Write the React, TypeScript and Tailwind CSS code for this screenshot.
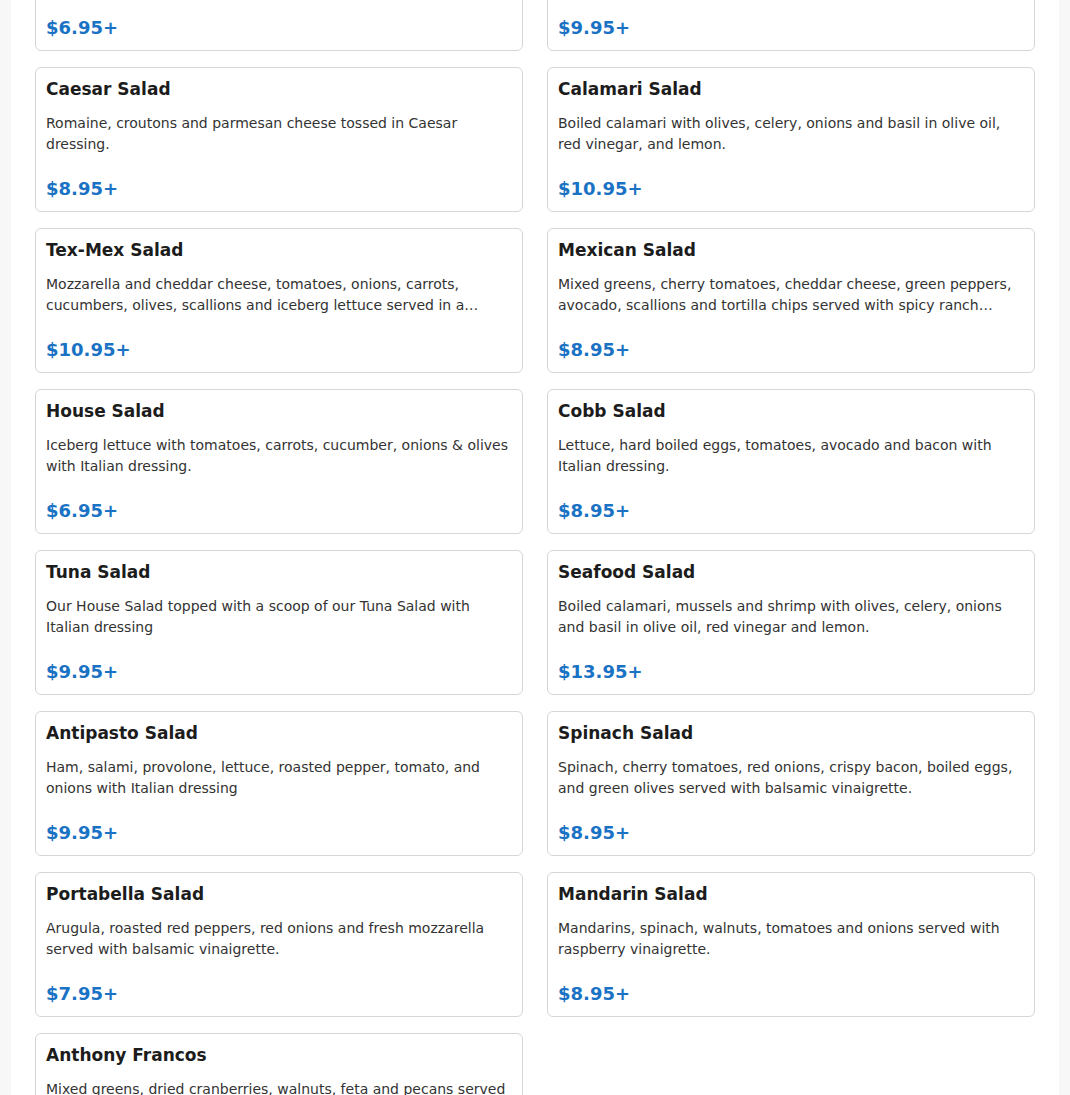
type Item = { name: string; desc: string; price: string };

const salads: Item[] = [
  { name: 'Garden Salad', desc: 'Mixed greens, tomatoes, cucumbers, carrots and onions with your choice of dressing.', price: '$6.95+' },
  { name: 'Greek Salad', desc: 'Romaine, feta cheese, kalamata olives, tomatoes, cucumbers and onions with Greek dressing.', price: '$9.95+' },
  { name: 'Caesar Salad', desc: 'Romaine, croutons and parmesan cheese tossed in Caesar dressing.', price: '$8.95+' },
  { name: 'Calamari Salad', desc: 'Boiled calamari with olives, celery, onions and basil in olive oil, red vinegar, and lemon.', price: '$10.95+' },
  { name: 'Tex-Mex Salad', desc: 'Mozzarella and cheddar cheese, tomatoes, onions, carrots, cucumbers, olives, scallions and iceberg lettuce served in a tortilla shell with salsa and sour cream.', price: '$10.95+' },
  { name: 'Mexican Salad', desc: 'Mixed greens, cherry tomatoes, cheddar cheese, green peppers, avocado, scallions and tortilla chips served with spicy ranch dressing.', price: '$8.95+' },
  { name: 'House Salad', desc: 'Iceberg lettuce with tomatoes, carrots, cucumber, onions & olives with Italian dressing.', price: '$6.95+' },
  { name: 'Cobb Salad', desc: 'Lettuce, hard boiled eggs, tomatoes, avocado and bacon with Italian dressing.', price: '$8.95+' },
  { name: 'Tuna Salad', desc: 'Our House Salad topped with a scoop of our Tuna Salad with Italian dressing', price: '$9.95+' },
  { name: 'Seafood Salad', desc: 'Boiled calamari, mussels and shrimp with olives, celery, onions and basil in olive oil, red vinegar and lemon.', price: '$13.95+' },
  { name: 'Antipasto Salad', desc: 'Ham, salami, provolone, lettuce, roasted pepper, tomato, and onions with Italian dressing', price: '$9.95+' },
  { name: 'Spinach Salad', desc: 'Spinach, cherry tomatoes, red onions, crispy bacon, boiled eggs, and green olives served with balsamic vinaigrette.', price: '$8.95+' },
  { name: 'Portabella Salad', desc: 'Arugula, roasted red peppers, red onions and fresh mozzarella served with balsamic vinaigrette.', price: '$7.95+' },
  { name: 'Mandarin Salad', desc: 'Mandarins, spinach, walnuts, tomatoes and onions served with raspberry vinaigrette.', price: '$8.95+' },
  { name: 'Anthony Francos', desc: 'Mixed greens, dried cranberries, walnuts, feta and pecans served with raspberry vinaigrette.', price: '$9.95+' },
];

function MenuCard({ item }: { item: Item }) {
  return (
    <div className="rounded-md border border-[#d6d6d6] bg-white p-2.5">
      <h3 className="text-[17px] font-bold leading-[22.5px] text-[#1c1c1c]">{item.name}</h3>
      <p className="mt-3 h-[42px] text-sm leading-[21px] text-[#333] line-clamp-2">{item.desc}</p>
      <div className="mt-[21px] text-lg font-bold leading-[25.5px] text-[#1a72c4]">{item.price}</div>
    </div>
  );
}

export default function App() {
  return (
    <div
      className="min-h-screen overflow-hidden bg-[#f7f7f7]"
      style={{ fontFamily: '"DejaVu Sans", Verdana, sans-serif' }}
    >
      <div className="mx-auto w-[1048px] bg-white px-6 pb-6">
        {/* page is scrolled: first row sits partly above the fold */}
        <div className="-mt-[94px] grid grid-cols-2 gap-x-6 gap-y-4">
          {salads.map((s) => (
            <MenuCard key={s.name} item={s} />
          ))}
        </div>
      </div>
    </div>
  );
}
